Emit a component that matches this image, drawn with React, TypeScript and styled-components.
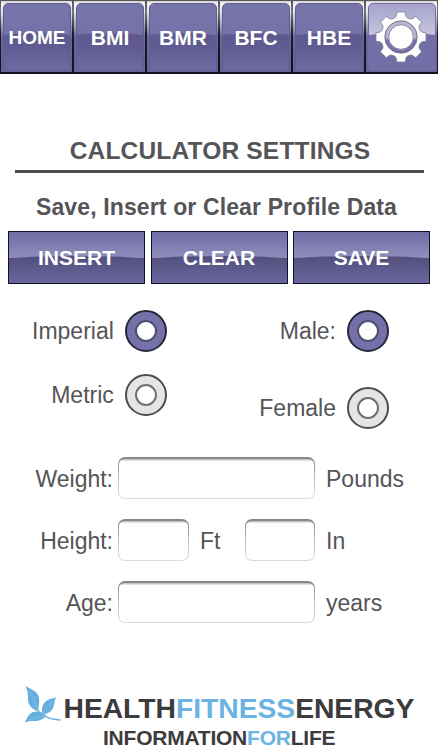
import React from "react";
import styled, { createGlobalStyle, css } from "styled-components";

const GlobalStyle = createGlobalStyle`
  *, *::before, *::after { box-sizing: border-box; }
  body { margin: 0; background: #fff; }
  button, input { font: inherit; margin: 0; padding: 0; }
`;

const Page = styled.main`
  width: 438px;
  height: 750px;
  overflow: hidden;
  display: flex;
  flex-direction: column;
  background: #fff;
  color: #555457;
  font-family: "Liberation Sans", Arial, sans-serif;
  font-size: 23px;
  line-height: 26px;
  & > * { flex: none; }
`;

const NavBar = styled.nav`
  display: grid;
  grid-template-columns: repeat(6, 73px);
  height: 74px;
`;

const NavCell = styled.button`
  display: flex;
  padding: 2px 1px 1px 2px;
  border: solid transparent;
  border-width: 1px 1px 2px 1px;
  background:
    linear-gradient(#d2d1d0 0, #f6f5f4 3px, #e2e1e8 12px, #8d8bae 30px, #6a67a0 36px, #66639b 100%) padding-box,
    linear-gradient(#55545a 0, #77757c 12px, #1c1a28 34px, #12111d 100%) border-box;
`;

const gloss = css`
  position: relative;
  isolation: isolate;
  overflow: hidden;
  &::before {
    content: "";
    position: absolute;
    z-index: -1;
    left: -45%;
    right: -45%;
  }
`;

const NavFace = styled.span<{ $size: number; $active?: boolean }>`
  ${gloss}
  flex: 1;
  display: flex;
  align-items: center;
  justify-content: center;
  border: 1.5px solid ${(p) => (p.$active ? "#6f6ca0" : "#5f5c92")};
  border-radius: 5px;
  background: ${(p) =>
    p.$active ? "linear-gradient(#a5a3cb, #cac8e2 34px)" : "linear-gradient(#7773ab, #7571a9 32px)"};
  color: #fff;
  font-size: ${(p) => p.$size}px;
  font-weight: bold;
  &::before {
    top: 29px;
    height: 90px;
    border-radius: 50% 50% 0 0 / 14px 14px 0 0;
    background: ${(p) =>
      p.$active ? "#726ea7" : "linear-gradient(#5d598c 0, #605c92 14px, #6d69a2 36px)"};
  }
`;

const NavText = styled.span`
  padding-top: 2px;
`;

const Title = styled.h1`
  margin: 64px 14px 0 15px;
  height: 35px;
  border-bottom: 3px solid #4c4b4e;
  font-size: 24.5px;
  letter-spacing: 0.18px;
  line-height: 26px;
  padding-left: 1px;
  text-align: center;
  white-space: nowrap;
`;

const Subtitle = styled.h2`
  margin: 21px 0 11px;
  padding-right: 5px;
  font-size: 23px;
  letter-spacing: 0.13px;
  line-height: 26px;
  text-align: center;
  white-space: nowrap;
`;

const Actions = styled.div`
  display: grid;
  grid-template-columns: repeat(3, 137px);
  gap: 5.5px;
  margin-left: 8px;
  height: 53px;
`;

const ActionButton = styled.button`
  ${gloss}
  border: 1px solid #12112a;
  background: linear-gradient(#6e6ba5, #9491c0 28px);
  color: #fff;
  font-size: 21px;
  font-weight: bold;
  line-height: 50px;
  &::before {
    top: 24px;
    height: 60px;
    left: -20%;
    right: -20%;
    border-radius: 50% 50% 0 0 / 7px 7px 0 0;
    background: linear-gradient(#524f7c, #6a67a0 28px);
  }
`;

const Choices = styled.div`
  display: flex;
  justify-content: space-between;
  margin: 26px 49px 0 32px;
  height: 122px;
`;

const ChoiceGroup = styled.div<{ $gap: number }>`
  display: flex;
  flex-direction: column;
  align-items: flex-end;
  gap: ${(p) => p.$gap}px;
`;

const Choice = styled.label`
  display: flex;
  align-items: center;
  gap: 11px;
  height: 42px;
`;

const Ring = styled.span<{ $on?: boolean }>`
  display: grid;
  place-items: center;
  width: 42px;
  height: 42px;
  border: 2px solid ${(p) => (p.$on ? "#29273c" : "#4d4d4f")};
  border-radius: 50%;
  background: ${(p) => (p.$on ? "#7471a9" : "#e5e5e6")};
  &::after {
    content: "";
    width: 22px;
    height: 22px;
    border: 2px solid ${(p) => (p.$on ? "#504d72" : "#707072")};
    border-radius: 50%;
    background: #fff;
  }
`;

const Fields = styled.form`
  display: grid;
  gap: 20px;
  margin-top: 25px;
`;

const FieldRow = styled.div`
  display: grid;
  grid-template-columns: 112px 71px 56px 70px 1fr;
  align-items: center;
  height: 42px;
`;

const FieldLabel = styled.label`
  margin-right: -1px;
  padding-top: 2px;
  text-align: right;
  white-space: nowrap;
`;

const Box = styled.input<{ $wide?: boolean }>`
  grid-column: span ${(p) => (p.$wide ? 3 : 1)};
  width: 100%;
  min-width: 0;
  height: 42px;
  margin-left: 6px;
  border: 1.5px solid transparent;
  border-top-width: 2px;
  border-radius: 7px;
  outline: none;
  background:
    linear-gradient(#b5b5b5 0, #fff 2.5px) padding-box,
    linear-gradient(#858585, #a0a0a0 25%, #c8c8c8 60%, #dcdcdc) border-box;
`;

const Unit = styled.span`
  padding: 2px 0 0 17px;
`;

const Logo = styled.footer`
  display: grid;
  grid-template-columns: 39.5px auto;
  justify-content: start;
  margin: 63px 0 0 24px;
  color: #3c3b3e;
  font-weight: bold;
  white-space: nowrap;
`;

const LogoName = styled.div`
  font-size: 28.3px;
  letter-spacing: -0.04px;
  line-height: 32px;
  margin-top: 6px;
`;

const LogoTag = styled.div`
  grid-column: 1 / -1;
  padding-left: 79px;
  margin-top: -1px;
  font-size: 21px;
  line-height: 26px;
  letter-spacing: -0.23px;
`;

const Accent = styled.span`
  color: #6bb3e3;
`;

const gearPath = (() => {
  const teeth: [number, number][] = [[-19, 20.2], [-13.5, 21.2], [-9.5, 25.4], [9.5, 25.4], [13.5, 21.2], [19, 20.2]];
  const points: string[] = [];
  for (let i = 0; i < 8; i++) {
    for (const [offset, r] of teeth) {
      const a = ((i * 45 + offset) * Math.PI) / 180;
      points.push(`${(r * Math.sin(a)).toFixed(2)} ${(-r * Math.cos(a)).toFixed(2)}`);
    }
  }
  return `M${points.join("L")}Z`;
})();

const GearIcon = styled.svg`
  flex: none;
  margin: -1px 0 0 -2px;
`;

const Gear = () => (
  <GearIcon width="54" height="54" viewBox="-27 -27 54 54" aria-label="Settings">
    <defs>
      <linearGradient id="gearRing" x1="0" y1="0" x2="0" y2="1">
        <stop offset="0.5" stopColor="#b8b7d2" />
        <stop offset="0.62" stopColor="#7773aa" />
      </linearGradient>
    </defs>
    <path d={gearPath} fill="#fff" stroke="#77748f" strokeWidth="0.8" strokeLinejoin="round" />
    <circle r="14.3" fill="#fff" stroke="url(#gearRing)" strokeWidth="3.6" />
    <circle r="16.2" fill="none" stroke="#66647e" strokeWidth="0.9" />
    <circle r="12.3" fill="#fff" stroke="#77758f" strokeWidth="0.9" />
  </GearIcon>
);

const Leaves = () => (
  <svg width="38" height="40" viewBox="0 0 38 40" fill="#65aee0">
    <path d="M1.5 0C6 3 12 4 14.5 10C16 15 15 20 13.5 25C8 23 4 19 4 13C4 8 3.5 4 1.5 0Z" />
    <path d="M32.5 11C30 14 31 18 29 22C27 26 23 28 18.5 28C17 22 19 17 23 14.5C26 12.5 30 12.5 32.500 11Z" />
    <path d="M0.5 36.5C3 33 4 28 9 26C14 24.5 19 26 22 29.5C19 34 14 35.5 9 35C6 34.8 3 35.5 0.5 36.5Z" />
    <path d="M13.5 23C15 28 23 33.5 36.5 34" fill="none" stroke="#65aee0" strokeWidth="1.3" />
    <path d="M5 5Q11 13 13.5 24M29 15Q21 21 18.5 28M4 34Q13 32 21 29.5" fill="none" stroke="#91c7ea" strokeWidth="0.6" />
  </svg>
);

const tabs = [
  { label: "HOME", size: 19 },
  { label: "BMI", size: 21 },
  { label: "BMR", size: 21 },
  { label: "BFC", size: 21 },
  { label: "HBE", size: 21 },
];

export default function App() {
  return (
    <>
      <GlobalStyle />
      <Page>
        <NavBar>
          {tabs.map((t) => (
            <NavCell key={t.label}>
              <NavFace $size={t.size}>
                <NavText>{t.label}</NavText>
              </NavFace>
            </NavCell>
          ))}
          <NavCell>
            <NavFace $size={21} $active>
              <Gear />
            </NavFace>
          </NavCell>
        </NavBar>
        <Title>CALCULATOR SETTINGS</Title>
        <Subtitle>Save, Insert or Clear Profile Data</Subtitle>
        <Actions>
          {["INSERT", "CLEAR", "SAVE"].map((a) => (
            <ActionButton key={a}>{a}</ActionButton>
          ))}
        </Actions>
        <Choices>
          <ChoiceGroup $gap={22}>
            <Choice>Imperial<Ring $on /></Choice>
            <Choice>Metric<Ring /></Choice>
          </ChoiceGroup>
          <ChoiceGroup $gap={35}>
            <Choice>Male:<Ring $on /></Choice>
            <Choice>Female<Ring /></Choice>
          </ChoiceGroup>
        </Choices>
        <Fields>
          <FieldRow>
            <FieldLabel>Weight:</FieldLabel>
            <Box $wide />
            <Unit>Pounds</Unit>
          </FieldRow>
          <FieldRow>
            <FieldLabel>Height:</FieldLabel>
            <Box />
            <Unit>Ft</Unit>
            <Box />
            <Unit>In</Unit>
          </FieldRow>
          <FieldRow>
            <FieldLabel>Age:</FieldLabel>
            <Box $wide />
            <Unit>years</Unit>
          </FieldRow>
        </Fields>
        <Logo>
          <Leaves />
          <LogoName>HEALTH<Accent>FITNESS</Accent>ENERGY</LogoName>
          <LogoTag>INFORMATION<Accent>FOR</Accent>LIFE</LogoTag>
        </Logo>
      </Page>
    </>
  );
}
